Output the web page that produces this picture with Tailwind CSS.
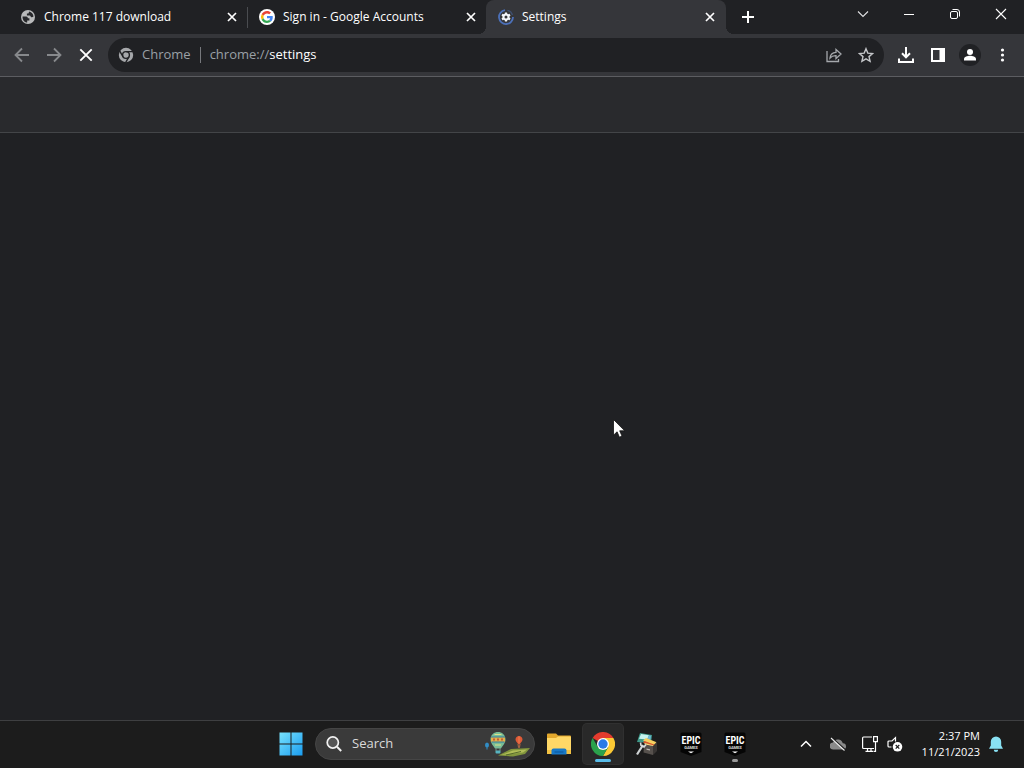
<!DOCTYPE html>
<html lang="en">
<head>
<meta charset="utf-8">
<title>Settings</title>
<script src="https://cdn.jsdelivr.net/npm/@tailwindcss/browser@4"></script>
</head>
<body class="flex h-screen flex-col overflow-hidden bg-[#202124] font-['Segoe_UI','Open_Sans',sans-serif] text-xs text-white">

<!-- Tab strip -->
<header class="flex h-[34px] shrink-0 bg-[#202124] pl-2">
  <div role="tablist" class="flex">
    <div role="tab" class="flex w-[240px] items-center gap-2 border-r border-[#4a4c50] pr-[7px] pl-3 [border-image:linear-gradient(transparent_8px,#4a4c50_8px,#4a4c50_27px,transparent_27px)_1]">
      <svg class="size-4 shrink-0" viewBox="0 0 16 16"><circle cx="8" cy="8" r="7" fill="#b9babb"/><path d="M2.6 7.4h3.6c1.3 0 1.6 1 1.6 1.8h1.6v2.2H7.2v2.1C4.3 13.2 2.3 10.700 2.600 7.400zM9.200 2.600c2.400.6 4.100 2.600 4.300 5-.9.6-1.800.8-2.500.3-.6-.5-.4-1.500-1.300-1.500H6.900V4.600h1.500z" fill="#27282b"/></svg>
      <span class="flex-1 truncate">Chrome 117 download</span>
      <button aria-label="Close tab" class="grid size-4 place-items-center"><svg class="size-2.5" viewBox="0 0 10 10" stroke="#fff" stroke-width="1.7"><path d="M1 1l8 8M9 1l-8 8"/></svg></button>
    </div>
    <div role="tab" class="flex w-[238px] items-center gap-2 pr-[7px] pl-[11px]">
      <svg class="size-4 shrink-0" viewBox="0 0 48 48"><circle cx="24" cy="24" r="24" fill="#fff"/><g transform="translate(6 6) scale(.75)"><path fill="#ea4335" d="M24 9.500c3.500 0 6.700 1.200 9.200 3.600l6.900-6.900C35.900 2.400 30.500 0 24 0 14.600 0 6.500 5.400 2.600 13.200l8 6.200C12.400 13.700 17.700 9.500 24 9.500z"/><path fill="#4285f4" d="M47 24.500c0-1.600-.2-3.100-.4-4.500H24v9h12.900c-.6 3-2.200 5.500-4.700 7.200l7.700 6C44.400 38 47 31.800 47 24.500z"/><path fill="#fbbc05" d="M10.500 28.600a14.500 14.500 0 010-9.200l-8-6.200a24 24 0 000 21.600z"/><path fill="#34a853" d="M24 48c6.500 0 11.900-2.100 15.900-5.800l-7.700-6c-2.200 1.500-4.900 2.300-8.200 2.300-6.300 0-11.600-4.200-13.500-9.900l-8 6.200C6.500 42.600 14.600 48 24 48z"/></g></svg>
      <span class="flex-1 truncate">Sign in - Google Accounts</span>
      <button aria-label="Close tab" class="grid size-4 place-items-center"><svg class="size-2.5" viewBox="0 0 10 10" stroke="#fff" stroke-width="1.7"><path d="M1 1l8 8M9 1l-8 8"/></svg></button>
    </div>
    <div role="tab" aria-selected="true" class="relative flex w-[240px] items-center gap-2 rounded-t-lg bg-[#35363a] pr-2 pl-3">
      <span class="absolute bottom-0 -left-2 size-2 bg-[radial-gradient(circle_at_0_0,transparent_8px,#35363a_8px)]"></span>
      <span class="absolute -right-2 bottom-0 size-2 bg-[radial-gradient(circle_at_100%_0,transparent_8px,#35363a_8px)]"></span>
      <svg class="size-4 shrink-0" viewBox="0 0 16 16"><path d="M7 1.100A7 7 0 1 0 15 8" fill="none" stroke="#4c70b8" stroke-width="1.800"/><path d="M9.500 1.300A7 7 0 0 1 14.500 6" fill="none" stroke="#4c70b8" stroke-opacity=".45" stroke-width="1.200"/><path fill="#f3f6fb" fill-rule="evenodd" d="M7 3.400h2l.3 1.300.9.500 1.300-.4 1 1.700-1 .9v1.200l1 .9-1 1.700-1.300-.4-.9.500L9 12.600H7l-.3-1.300-.9-.5-1.300.4-1-1.700 1-.9V7.400l-1-.9 1-1.700 1.300.4.900-.5zM8 6.500a1.500 1.500 0 100 3 1.500 1.500 0 000-3z"/></svg>
      <span class="flex-1 truncate">Settings</span>
      <button aria-label="Close tab" class="grid size-4 place-items-center"><svg class="size-2.5" viewBox="0 0 10 10" stroke="#fff" stroke-width="1.7"><path d="M1 1l8 8M9 1l-8 8"/></svg></button>
    </div>
  </div>
  <button aria-label="New tab" class="ml-2 grid w-7 place-items-center"><svg class="size-3" viewBox="0 0 12 12" stroke="#fff" stroke-width="2"><path d="M6 0v12M0 6h12"/></svg></button>
  <div class="ml-auto flex h-7">
    <button aria-label="Search tabs" class="grid w-[46px] place-items-center"><svg class="h-2 w-3" viewBox="0 0 12 8" fill="none" stroke="#e0e1e3" stroke-width="1.100"><path d="M1 1.500l5 5 5-5"/></svg></button>
    <button aria-label="Minimize" class="grid w-[46px] place-items-center"><svg class="h-3 w-2.5" viewBox="0 0 10 12" stroke="#fff"><path d="M0 6.500h10"/></svg></button>
    <button aria-label="Restore" class="grid w-[46px] place-items-center"><svg class="size-3" viewBox="0 0 12 12" fill="none" stroke="#fff"><rect x="1.500" y="3.500" width="7" height="7" rx="1.500"/><path d="M3.500 1.500H8a2.500 2.500 0 012.500 2.500v4.500"/></svg></button>
    <button aria-label="Close window" class="grid w-[46px] place-items-center"><svg class="size-3" viewBox="0 0 12 12" stroke="#fff" stroke-width="1.100"><path d="M1 1l10 10M11 1L1 11"/></svg></button>
  </div>
</header>

<!-- Toolbar -->
<nav class="flex h-[43px] shrink-0 items-center border-b border-[#5c5d61] bg-[#35363a] px-1.5">
  <button aria-label="Back" class="grid size-8 place-items-center"><svg class="size-4" viewBox="0 0 16 16" fill="none" stroke="#87898c" stroke-width="1.800"><path d="M15 8H2M8 1.500L1.500 8 8 14.500"/></svg></button>
  <button aria-label="Forward" class="grid size-8 place-items-center"><svg class="size-4" viewBox="0 0 16 16" fill="none" stroke="#87898c" stroke-width="1.800"><path d="M1 8h13M8 1.500L14.500 8 8 14.500"/></svg></button>
  <button aria-label="Stop" class="grid size-8 place-items-center"><svg class="size-3.5" viewBox="0 0 14 14" stroke="#fff" stroke-width="1.900"><path d="M1.300 1.300l11.400 11.400M12.700 1.300L1.300 12.700"/></svg></button>
  <div class="mx-1.5 flex h-[34px] flex-1 items-center rounded-full bg-[#202124] pr-0.5 pl-2.5 text-[13px] text-[#9aa0a6]">
    <svg class="mr-2 size-4" viewBox="0 0 16 16"><circle cx="8" cy="8" r="7.200" fill="#a6a8ab"/><g fill="none" stroke="#202124" stroke-width="1.400"><circle cx="8" cy="8" r="3.400"/><path d="M8 4.600h7M5.100 9.800L1.600 3.800M10.900 9.800L7.500 15.800"/></g></svg>
    <span>Chrome</span>
    <span class="mx-[9px] h-4 w-px bg-[#76787c]"></span>
    <div role="textbox" aria-label="Address" contenteditable="true" class="flex-1 outline-none">chrome://<span class="text-white">settings</span></div>
    <button aria-label="Share" class="grid size-8 place-items-center"><svg class="size-4" viewBox="0 0 16 16" fill="none" stroke="#a5a8ac" stroke-width="1.300"><path d="M1 4v10.500h11.500V12M4 11c.3-3.700 2.500-5.500 6-5.700V2.500l5 4.500-5 4.500V8.700C7.300 8.600 5.500 9.300 4 11z"/></svg></button>
    <button aria-label="Bookmark this tab" class="grid size-8 place-items-center"><svg class="size-4" viewBox="0 0 16 16" fill="none" stroke="#c3c5c8" stroke-width="1.400"><path d="M8 1.700l1.800 4.400 4.800.4-3.600 3.100 1.100 4.700L8 11.800l-4.100 2.500L5 9.600 1.400 6.500l4.800-.4z"/></svg></button>
  </div>
  <button aria-label="Downloads" class="grid size-8 place-items-center"><svg class="size-4" viewBox="0 0 16 16" fill="none" stroke="#fff" stroke-width="2"><path d="M8 0v10M4 6.300l4 4 4-4M1 11.500v3.400h14v-3.400"/></svg></button>
  <button aria-label="Side panel" class="grid size-8 place-items-center"><svg class="size-3.5" viewBox="0 0 14 14"><path fill="#fff" fill-rule="evenodd" d="M0 0h14v14H0zM2 2v10h6.500V2z"/></svg></button>
  <button aria-label="Profile" class="grid size-8 place-items-center"><svg class="size-[22px]" viewBox="0 0 22 22"><circle cx="11" cy="11" r="11" fill="#202124"/><g fill="#fff"><circle cx="11" cy="8" r="3"/><path d="M5 16.500v-1.300c0-2.400 3.500-3.400 6-3.400s6 1 6 3.400v1.300z"/></g></svg></button>
  <button aria-label="Menu" class="grid size-8 place-items-center"><svg class="size-4" viewBox="0 0 16 16" fill="#fff"><circle cx="8.500" cy="3" r="1.600"/><circle cx="8.500" cy="8" r="1.600"/><circle cx="8.500" cy="13" r="1.600"/></svg></button>
</nav>

<!-- Page -->
<main class="flex flex-1 flex-col bg-[#202124]">
  <div class="h-14 border-b border-[#434548] bg-[#292a2d]"></div>
</main>

<!-- Mouse pointer -->
<svg class="absolute top-[419px] left-[613px] h-5 w-3" viewBox="0 0 12 20"><path d="M.5.500v15.700l3.600-3.400 2.300 5.400 2.600-1.100-2.300-5.300h5z" fill="#fff" stroke="#111" stroke-width=".8"/></svg>

<!-- Taskbar -->
<footer class="grid h-12 shrink-0 grid-cols-[1fr_auto_1fr] border-t border-[#3e3f41] bg-[#1c1c1c] pb-0.5 pl-0.5">
  <div></div>
  <div class="flex items-center">
    <button aria-label="Start" class="grid h-10 w-11 place-items-center"><svg class="size-6" viewBox="0 0 24 24"><defs><linearGradient id="win" x1="0" y1="0" x2="24" y2="24" gradientUnits="userSpaceOnUse"><stop stop-color="#7ae4fd"/><stop offset="1" stop-color="#189bf0"/></linearGradient></defs><path fill="url(#win)" d="M.5.500h11v11H.5zM12.500.500h11v11h-11zM.5 12.500h11v11H.5zM12.500 12.500h11v11h-11z"/></svg></button>
    <button class="mx-0.5 flex h-8 w-[220px] items-center rounded-full border border-[#454545] bg-[#3a3a3a] pr-1 pl-2.5 text-[13px] text-[#dadada]">
      <svg class="mr-2.5 size-4" viewBox="0 0 16 16" fill="#555" stroke="#f2f2f2" stroke-width="1.700"><circle cx="6.800" cy="6.500" r="5.600"/><path d="M11 10.800l4.200 4.200" stroke-width="2"/></svg>
      <span>Search</span>
      <svg class="ml-auto h-7 w-[46px]" viewBox="0 0 46 28"><path d="M14 25.500l13-6.500 19-1-5 6-12 2.500z" fill="#82963d"/><path d="M17 25l12-4.500 14-1-4 3z" fill="#b1bd58"/><path d="M22 25l15-3.500" stroke="#566a2c"/><ellipse cx="3" cy="15" rx="2" ry="2.500" fill="#318dc5"/><path d="M3 17v2.500" stroke="#318dc5"/><path d="M6.500 9.500c0-10 15-10 15 0 0 4-3 6-4.500 9h-6C9.500 15.500 6.500 13.500 6.500 9.500z" fill="#79bd96"/><path d="M7 7h14v5H7z" fill="#e2b34b"/><path d="M7 7h14M7.500 12h13" stroke="#327b9f"/><path d="M9 9.500h2m2 0h2m2 0h2" stroke="#c45b39" stroke-width="2"/><path d="M10.500 4.500h7M11 15h6" stroke="#dce28b"/><path d="M12 18v3m4-3v3" stroke="#7b9385"/><rect x="11.500" y="20.500" width="5" height="3" rx="1" fill="#57b4c0"/><path d="M31.500 9.500c0-4.800 7-4.800 7 0 0 2-2 3-2.500 4.500h-2c-.5-1.500-2.500-2.500-2.500-4.500z" fill="#de5a36"/><path d="M34 14l.5 3.500h1l.5-3.500" stroke="#b76b45" fill="none"/><path d="M35 6.300v7" stroke="#ed8052"/></svg>
    </button>
    <button aria-label="File Explorer" class="grid h-10 w-11 place-items-center"><svg class="h-[22px] w-6" viewBox="0 0 24 22"><path d="M0 1.500Q0 .5 1 .5h8l2 2h12q1 0 1 1V20q0 1-1 1H1q-1 0-1-1z" fill="#e3a82c"/><path d="M0 5h9l2-1.500h12q1 0 1 1V20q0 1-1 1H1q-1 0-1-1z" fill="#ffd867"/><path d="M0 17h24v3q0 1-1 1H1q-1 0-1-1z" fill="#f2c142"/><path d="M4.500 21.500v-4q0-2 2-2h11q2 0 2 2v4z" fill="#1879c8"/><path d="M7.500 19h9" stroke="#0f60a9" stroke-width="1.500"/></svg></button>
    <button aria-label="Google Chrome" class="relative mx-0.5 grid size-10 place-items-center rounded bg-[#292929] ring-1 ring-[#303030]"><svg class="size-6" viewBox="0 0 24 24"><path fill="#e33b2e" d="M12 12L1.600 6a12 12 0 0120.800 0z"/><path fill="#fcc934" d="M12 12V6h10.400A12 12 0 0112 24l5.200-9z"/><path fill="#2ba24c" d="M12 24A12 12 0 011.600 6l5.200 9 5.200 3 5.200-3z"/><circle cx="12" cy="12" r="6" fill="#fff"/><circle cx="12" cy="12" r="4.700" fill="#2b79e7"/></svg><span class="absolute bottom-0.5 h-[3px] w-4 rounded-full bg-[#58bce9]"></span></button>
    <button aria-label="Archive tool" class="grid h-10 w-11 place-items-center"><svg class="size-6" viewBox="0 0 24 24"><path d="M5 1l12 2-1 8-14-1z" fill="#3f9a8a"/><path d="M6 2l8 1.300-2 4.200-8-.8z" fill="#c6f3ee"/><path d="M14 3.300l2 .4-.6 4-3-.4z" fill="#6fb6d8"/><path d="M8 8.500l3-2.500 10 4 1 2.500-2 2z" fill="#f3d060"/><path d="M8 10.500l1.500-1.500 11 4-1.500 2z" fill="#d9542f"/><path d="M9 12l1-1 9 2.500-1 1.500z" fill="#f5d878"/><path d="M9 12.500l9 1.500v9L8.500 20.500z" fill="#56514d"/><path d="M18 14l4-4.500v9.500l-4 4z" fill="#393634"/><path d="M11.500 16.500l3.500.7v1.300l-3.500-.7z" fill="#bdb8b1"/><path d="M2 22.500l6-9.500" stroke="#cfd3d4" stroke-width="2.200"/><path d="M5.500 10.500l.5 3 3 1.500 2-2.500" fill="none" stroke="#d8dcdd" stroke-width="1.600"/></svg></button>
    <button aria-label="Epic Games Launcher" class="grid h-10 w-11 place-items-center"><svg class="h-6 w-[22px]" viewBox="0 0 22 24"><path d="M2 .500h18q1.500 0 1.500 1.500v18L11 24 .5 20V2Q.5.500 2 .500z" fill="#050505"/><text x="11" y="12" text-anchor="middle" font-family="Liberation Sans Narrow, Roboto Condensed, Roboto, sans-serif" font-weight="700" font-size="10" fill="#fff">EPIC</text><text x="11" y="17" text-anchor="middle" font-family="Roboto, sans-serif" font-weight="700" font-size="4" fill="#ddd">GAMES</text><path d="M8 19.500h6l-3 1.800z" fill="#fff"/></svg></button>
    <button aria-label="Epic Games Launcher, running" class="relative grid h-10 w-11 place-items-center"><svg class="h-6 w-[22px]" viewBox="0 0 22 24"><path d="M2 .500h18q1.500 0 1.500 1.500v18L11 24 .5 20V2Q.5.500 2 .500z" fill="#050505"/><text x="11" y="12" text-anchor="middle" font-family="Liberation Sans Narrow, Roboto Condensed, Roboto, sans-serif" font-weight="700" font-size="10" fill="#fff">EPIC</text><text x="11" y="17" text-anchor="middle" font-family="Roboto, sans-serif" font-weight="700" font-size="4" fill="#ddd">GAMES</text><path d="M8 19.500h6l-3 1.800z" fill="#fff"/></svg><span class="absolute bottom-0.5 left-1/2 h-[3px] w-1.5 -translate-x-1/2 rounded-full bg-[#9a9a9a]"></span></button>
  </div>
  <div class="flex items-center justify-end pr-5">
    <button aria-label="Show hidden icons" class="grid h-10 w-8 place-items-center"><svg class="h-2 w-3" viewBox="0 0 12 8" fill="none" stroke="#fff" stroke-width="1.500"><path d="M1 6.500l5-5 5 5"/></svg></button>
    <button aria-label="OneDrive" class="grid h-10 w-8 place-items-center"><svg class="size-4" viewBox="0 0 16 16"><path d="M3.300 13.500a3.500 3.500 0 01-.3-7A5.300 5.300 0 0112.800 7.300 3.100 3.100 0 0113 13.500z" fill="#8a8a8a"/><path d="M1.800 1.800l13.500 12" stroke="#1c1c1c" stroke-width="1.600"/><path d="M1 2l13.500 12.500" stroke="#eee" stroke-width="1.100"/></svg></button>
    <button aria-label="Network" class="grid h-10 w-8 place-items-center"><svg class="size-4" viewBox="0 0 16 16" fill="none" stroke="#fff" stroke-width="1.200"><path d="M10 1H1.500Q.6 1 .6 2v9.500q0 1 1 1H12M3.500 15.400h8M5.500 12.500v3M9 12.500v3M11.600.600h3.800v5h-3.800zM13.500 5.600v9.800H12"/></svg></button>
    <button aria-label="Volume muted" class="mr-[18px] grid h-10 w-[18px] place-items-center"><svg class="size-4" viewBox="0 0 16 16" fill="none" stroke="#fff" stroke-width="1.200"><path d="M8.500 5.500V1.600L5 5H2Q1 5 1 6v4q0 1 1 1h2.500"/><circle cx="10.500" cy="10.800" r="4.800" fill="#fff" stroke="none"/><path d="M8.700 9l3.600 3.600M12.300 9l-3.600 3.600" stroke="#1c1c1c"/></svg></button>
    <button class="text-right text-[11px] leading-4">2:37 PM<br>11/21/2023</button>
    <button aria-label="Notifications" class="ml-2 grid h-10 w-4 place-items-center"><svg class="size-4" viewBox="0 0 16 16" fill="#89e1f3"><path d="M8 .500A5.200 5.200 0 002.800 5.700v3.800L1 12.800h14l-1.800-3.300V5.700A5.200 5.200 0 008 .500zM5.800 13.700h4.400a2.200 2.200 0 01-4.400 0z"/></svg></button>
  </div>
</footer>
</body>
</html>
